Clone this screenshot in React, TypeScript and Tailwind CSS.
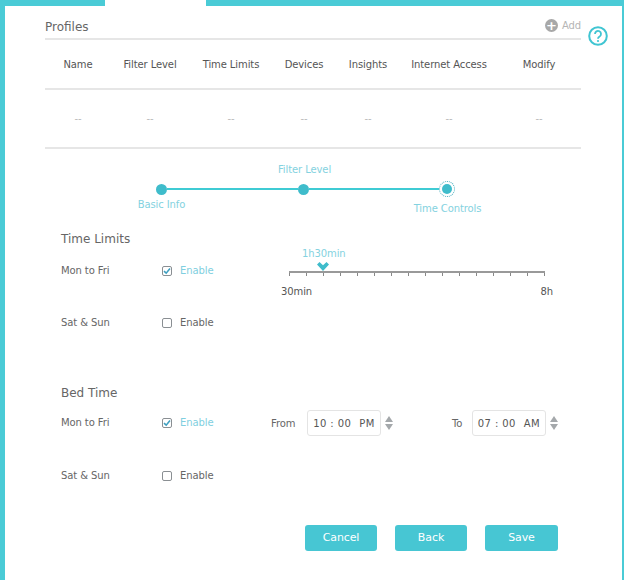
const columns = ["Name", "Filter Level", "Time Limits", "Devices", "Insights", "Internet Access", "Modify"];
const ticks = Array.from({ length: 16 }, (_, i) => i);

function Checkbox({ checked }: { checked?: boolean }) {
  return (
    <div className="flex items-center gap-[8px] text-[10px]">
      <span className="flex h-[10px] w-[10px] items-center justify-center rounded-[2px] border border-[#8a8f93] bg-white">
        {checked && (
          <svg width="8" height="8" viewBox="0 0 8 8" fill="none">
            <path d="M1 4.2 3.2 6.2 7 1.6" stroke="#3f9fc0" strokeWidth="1.6" />
          </svg>
        )}
      </span>
      <span className={checked ? "text-[#7fcfe0]" : "text-[#666]"}>Enable</span>
    </div>
  );
}

function Row({ label, checked, height, children }: { label: string; checked?: boolean; height: string; children?: React.ReactNode }) {
  return (
    <div className={`flex items-start ${height}`}>
      <div className="w-[101px] text-[10px] leading-[14px] text-[#666]">{label}</div>
      <div className="w-[109px] leading-[14px]">
        <Checkbox checked={checked} />
      </div>
      {children}
    </div>
  );
}

function TimeInput({ label, labelWidth, value, meridiem }: { label: string; labelWidth: string; value: string; meridiem: string }) {
  return (
    <div className="flex items-center">
      <span className={`${labelWidth} text-[10px] text-[#666]`}>{label}</span>
      <div className="flex h-[26px] w-[74px] items-center justify-center gap-[8px] rounded-[3px] border border-[#e4e4e4] text-[10px] tracking-[0.4px] text-[#555]">
        <span>{value}</span>
        <span>{meridiem}</span>
      </div>
      <div className="ml-[4px] flex flex-col gap-[2px]">
        <span className="h-0 w-0 border-x-[4.5px] border-b-[6px] border-x-transparent border-b-[#a4a8ab]" />
        <span className="h-0 w-0 border-x-[4.5px] border-t-[6px] border-x-transparent border-t-[#a4a8ab]" />
      </div>
    </div>
  );
}

export default function App() {
  return (
    <div className="flex h-[580px] w-[624px] flex-col bg-white font-['DejaVu_Sans',sans-serif] tracking-[-0.1px]">
      <div className="flex h-[6px] shrink-0">
        <div className="w-[105px] bg-[#4acbd6]" />
        <div className="w-[101px]" />
        <div className="flex-1 bg-[#4acbd6]" />
      </div>

      <div className="flex-1 border-l-[5px] border-r-[2px] border-[#4acbd6] pl-[40px] pr-[41px]">
        <div className="flex h-[34px] items-center justify-between border-b-2 border-[#e6e6e6] pt-[10px]">
          <h2 className="text-[12px] tracking-normal text-[#666]">Profiles</h2>
          <div className="relative">
            <div className="mb-[4px] flex items-center gap-[4px] text-[10px] text-[#b5b5b5]">
              <span className="flex h-[13px] w-[13px] items-center justify-center rounded-full bg-[#a8a8a8] text-[13px] font-bold leading-none text-white">+</span>
              Add
            </div>
            <svg className="absolute left-[43px] top-[8px]" width="20" height="20" viewBox="0 0 20 20" fill="none">
              <circle cx="10" cy="10" r="8.8" stroke="#40c5d2" strokeWidth="2" />
              <path d="M7 8a3 3 0 1 1 4.6 2.5c-1 .6-1.6 1.2-1.6 2.2" stroke="#40c5d2" strokeWidth="1.8" />
              <circle cx="10" cy="15" r="1.1" fill="#40c5d2" />
            </svg>
          </div>
        </div>

        <div className="grid h-[50px] grid-cols-[66px_78px_84px_62px_66px_96px_84px] items-center border-b-2 border-[#e6e6e6] text-center text-[10px] text-[#555]">
          {columns.map((c) => (
            <div key={c}>{c}</div>
          ))}
        </div>
        <div className="grid h-[59px] grid-cols-[66px_78px_84px_62px_66px_96px_84px] items-center border-b-2 border-[#e6e6e6] text-center text-[10px] text-[#bbb]">
          {columns.map((c) => (
            <div key={c}>--</div>
          ))}
        </div>

        <div className="ml-[45px] mt-[13px] w-[429px] text-[10px] text-[#84d2e0]">
          <div className="grid h-[14px] grid-cols-3 text-center">
            <span />
            <span>Filter Level</span>
            <span />
          </div>
          <div className="ml-[66px] mr-[64px] mt-[5px] flex h-[16px] items-center">
            <span className="h-[11px] w-[11px] shrink-0 rounded-full bg-[#3fbccb]" />
            <span className="h-[2px] flex-1 bg-[#3fcbd4]" />
            <span className="h-[11px] w-[11px] shrink-0 rounded-full bg-[#3fbccb]" />
            <span className="h-[2px] flex-1 bg-[#3fcbd4]" />
            <span className="flex h-[16px] w-[16px] shrink-0 items-center justify-center rounded-full border border-dotted border-[#3fa9bb]">
              <span className="h-[10px] w-[10px] rounded-full bg-[#3fbccb]" />
            </span>
          </div>
          <div className="grid grid-cols-3 text-center">
            <span>Basic Info</span>
            <span />
            <span className="mt-[4px]">Time Controls</span>
          </div>
        </div>

        <div className="pl-[16px]">
          <h3 className="mt-[15px] text-[12px] leading-[16px] tracking-normal text-[#666]">Time Limits</h3>
          <div className="mt-[17px]">
            <Row label="Mon to Fri" checked height="h-[52px]">
              <div className="w-[270px]">
                <div className="ml-[18px] w-[256px]">
                  <div className="-ml-[5px] -mt-[17px] w-[68px] pl-[18px] text-[10px] leading-[14px] text-[#84d2e0]">1h30min</div>
                  <div className="relative mt-[10px] flex h-[5px] items-start justify-between border-t-2 border-[#999]">
                    {ticks.map((t) => (
                      <span key={t} className="h-[3px] w-px bg-[#888]" />
                    ))}
                    <svg className="absolute -top-[11px] left-[28px]" width="12" height="9" viewBox="0 0 12 9" fill="#3fbccb">
                      <path d="M0 2.5 2.5 0 6 3.2 9.5 0 12 2.5 6 9Z" />
                    </svg>
                  </div>
                  <div className="-mx-[8px] mt-[8px] flex justify-between text-[10px] text-[#555]">
                    <span>30min</span>
                    <span>8h</span>
                  </div>
                </div>
              </div>
            </Row>
            <Row label="Sat & Sun" height="h-[14px]" />
          </div>

          <h3 className="mt-[55px] text-[12px] leading-[16px] tracking-normal text-[#666]">Bed Time</h3>
          <div className="mt-[15px]">
            <Row label="Mon to Fri" checked height="h-[53px]">
              <div className="-mt-[6px] flex">
                <TimeInput label="From" labelWidth="w-[36px]" value="10 : 00" meridiem="PM" />
                <div className="w-[59px]" />
                <TimeInput label="To" labelWidth="w-[20px]" value="07 : 00" meridiem="AM" />
              </div>
            </Row>
            <Row label="Sat & Sun" height="h-[14px]" />
          </div>
        </div>

        <div className="mt-[42px] flex pl-[260px]">
          <button className="h-[26px] w-[72px] rounded-[3px] bg-[#47c6d3] text-[11px] text-white">Cancel</button>
          <button className="ml-[18px] h-[26px] w-[72px] rounded-[3px] bg-[#47c6d3] text-[11px] text-white">Back</button>
          <button className="ml-[18px] h-[26px] w-[73px] rounded-[3px] bg-[#47c6d3] text-[11px] text-white">Save</button>
        </div>
      </div>
    </div>
  );
}
